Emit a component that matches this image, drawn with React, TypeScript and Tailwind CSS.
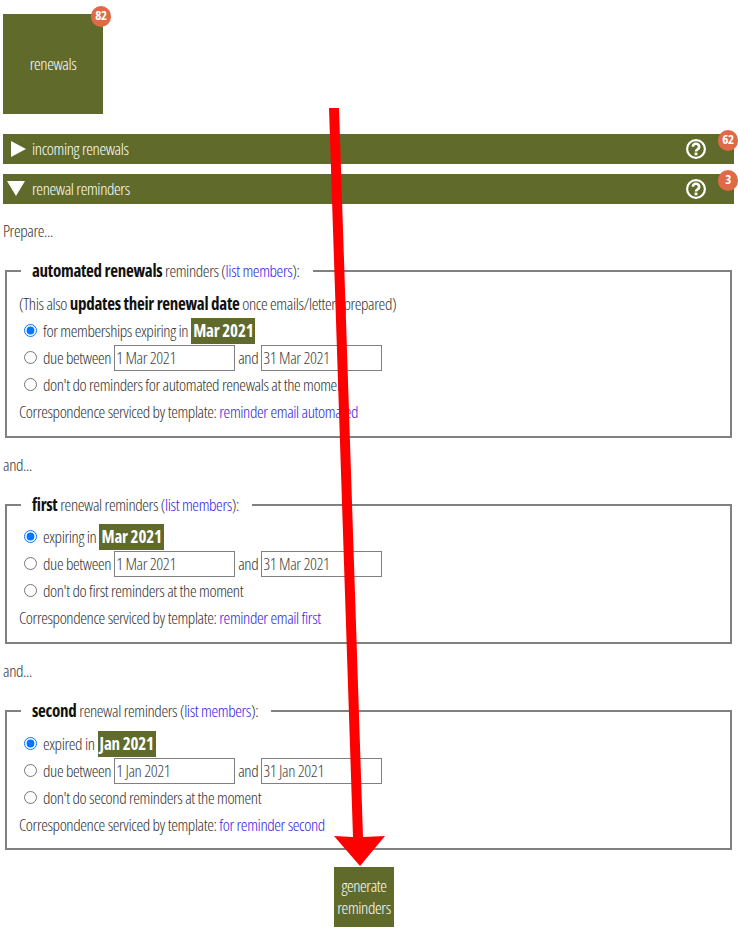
const olive = "bg-[#5f6a2b]";

function Badge({ n, pos }: { n: number; pos: string }) {
  return (
    <span className={`absolute flex h-[21px] w-[20px] items-center justify-center rounded-full bg-[#e06a45] pb-[3px] text-[13px] font-bold text-white ${pos}`}>
      {n}
    </span>
  );
}

function HelpIcon() {
  return (
    <svg width="20" height="20" viewBox="0 0 20 20" className="mr-[28px]" fill="none">
      <circle cx="10" cy="10" r="8.9" stroke="white" strokeWidth="2.2" />
      <path d="M6.9 7.8a3.1 3 0 1 1 4.6 2.6c-1 .6-1.5 1-1.5 2.2" stroke="white" strokeWidth="2.6" />
      <rect x="8.6" y="13.6" width="2.8" height="2.6" fill="white" />
    </svg>
  );
}

function Bar({ open, label, n }: { open: boolean; label: string; n: number }) {
  return (
    <div className={`relative flex h-[30px] items-center text-white ${olive}`}>
      {open ? (
        <svg width="18" height="16" viewBox="0 0 18 16" className="ml-[4px] mr-[7px]">
          <polygon points="0,0 18,0 9,15" fill="white" />
        </svg>
      ) : (
        <svg width="16" height="16" viewBox="0 0 16 16" className="ml-[8px] mr-[5px]">
          <polygon points="0,0 15,8 0,16" fill="white" />
        </svg>
      )}
      <span>{label}</span>
      <span className="ml-auto">
        <HelpIcon />
      </span>
      <Badge n={n} pos="-top-[4px] -right-[4px]" />
    </div>
  );
}

function DateBox({ value }: { value: string }) {
  return (
    <input
      readOnly
      value={value}
      className="h-[26px] w-[121px] border border-[#808080] bg-white pl-[1px] text-[#444]"
    />
  );
}

function Radio({ checked, children }: { checked?: boolean; children: React.ReactNode }) {
  return (
    <div className="flex h-[27px] items-center pl-[5px]">
      <input type="radio" readOnly checked={!!checked} className="mr-[6px] ml-0 h-[13px] w-[13px]" />
      {children}
    </div>
  );
}

function Section({
  title,
  rest,
  note,
  first,
  from,
  to,
  month,
  none,
  template,
  pad,
}: {
  title: string;
  rest: string;
  note?: boolean;
  first: string;
  from: string;
  to: string;
  month: string;
  none: string;
  template: string;
  pad: string;
}) {
  return (
    <fieldset className={`mx-[2px] w-[727px] border-2 border-[#808080] px-[12px] ${pad}`}>
      <legend className="ml-[2px] pl-[11px] pr-[13px]">
        <b className="font-bold tracking-[-0.28px] text-[#111]">{title}</b> {rest} (<a className="text-[#3322dd]">list members</a>):
      </legend>
      {note && (
        <div className="flex h-[27px] items-center">
          <span>
            (This also <b className="font-bold tracking-[-0.28px] text-[#111]">updates their renewal date</b> once emails/letters prepared)
          </span>
        </div>
      )}
      <Radio checked>
        {first}
        <span className={`ml-[3px] flex h-[26px] items-center px-[2px] font-bold tracking-[-0.2px] text-white ${olive}`}>{month}</span>
      </Radio>
      <Radio>
        <span className="mr-[3px]">due between</span>
        <DateBox value={from} />
        <span className="mx-[3px]">and</span>
        <DateBox value={to} />
      </Radio>
      <Radio>{none}</Radio>
      <div className="flex h-[27px] items-center">
        <span>
          Correspondence serviced by template: <a className="text-[#3322dd]">{template}</a>
        </span>
      </div>
    </fieldset>
  );
}

export default function App() {
  return (
    <div
      className="relative h-[936px] w-[738px] overflow-hidden bg-white pl-[3px] pt-[14px] text-[17px] font-light leading-[20px] tracking-[-0.4px] text-[#333] [font-stretch:75%]"
      style={{ fontFamily: '"Open Sans", sans-serif' }}
    >
      <div className={`relative flex h-[100px] w-[100px] items-center justify-center text-white ${olive}`}>
        renewals
        <Badge n={82} pos="-top-[8px] -right-[8px]" />
      </div>
      <div className="mt-[20px] flex w-[731px] flex-col gap-[10px]">
        <Bar open={false} label="incoming renewals" n={62} />
        <Bar open label="renewal reminders" n={3} />
      </div>
      <div className="mb-[20px] mt-[17px]">Prepare...</div>
      <Section
        title="automated renewals"
        rest="reminders"
        note
        first="for memberships expiring in"
        month="Mar 2021"
        from="1 Mar 2021"
        to="31 Mar 2021"
        none="don't do reminders for automated renewals at the moment"
        template="reminder email automated"
        pad="pb-[11px] pt-[9px]"
      />
      <div className="mb-[20px] mt-[17px]">and...</div>
      <Section
        title="first"
        rest="renewal reminders"
        first="expiring in"
        month="Mar 2021"
        from="1 Mar 2021"
        to="31 Mar 2021"
        none="don't do first reminders at the moment"
        template="reminder email first"
        pad="pb-[11px] pt-[8px]"
      />
      <div className="mb-[20px] mt-[17px]">and...</div>
      <Section
        title="second"
        rest="renewal reminders"
        first="expired in"
        month="Jan 2021"
        from="1 Jan 2021"
        to="31 Jan 2021"
        none="don't do second reminders at the moment"
        template="for reminder second"
        pad="pb-[10px] pt-[9px]"
      />
      <div className="mt-[17px] flex w-[722px] justify-center">
        <div className={`flex h-[60px] w-[60px] items-center justify-center text-center leading-[22px] text-white ${olive}`}>
          generate reminders
        </div>
      </div>
      <svg width="738" height="936" className="pointer-events-none absolute left-0 top-0">
        <polygon points="329,108 339,108 363,837 385,836 360,866 334,836 353,837" fill="#ff0000" />
      </svg>
    </div>
  );
}
